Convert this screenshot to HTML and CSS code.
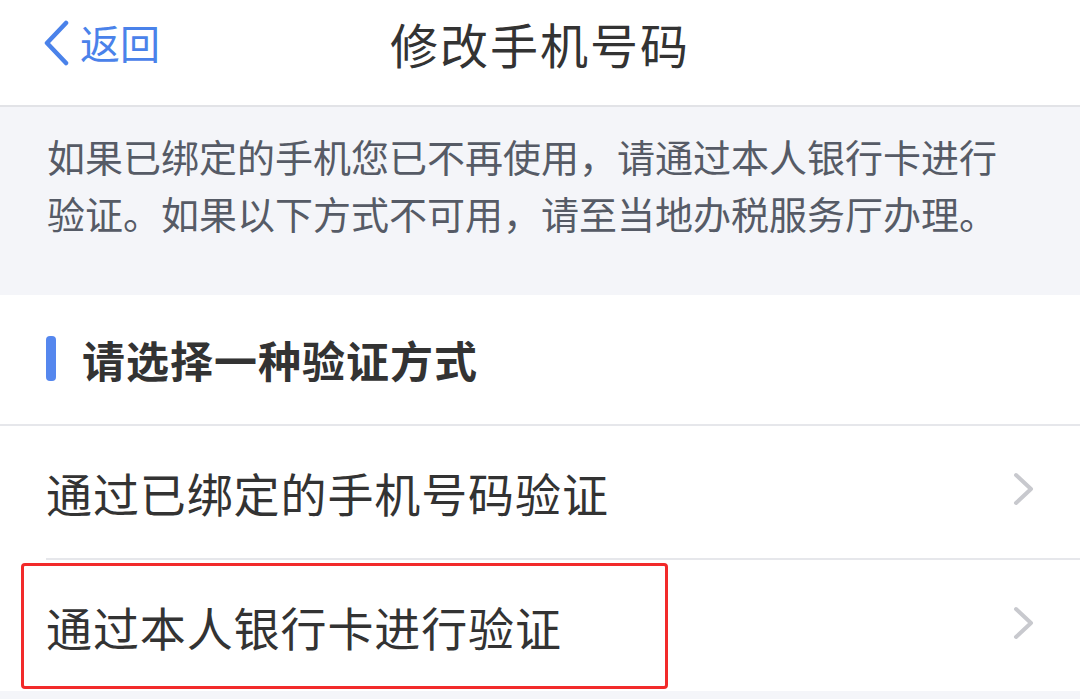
FILE: index.html
```html
<!DOCTYPE html>
<html lang="zh-CN">

<head>
    <meta charset="UTF-8">
    <meta name="viewport" content="width=device-width, initial-scale=1.0">
    <title>修改手机号码</title>
    <link rel="stylesheet" href="styles.css">
</head>

<body>
    <div class="page">
        <header class="nav">
            <a class="back" href="#">
                <svg class="back-icon" width="28" height="46" viewBox="0 0 28 46">
                    <path d="M24 3 L5 23 L24 43" fill="none" stroke="currentColor" stroke-width="4.5" stroke-linecap="round" stroke-linejoin="round" />
                </svg>
                <span>返回</span>
            </a>
            <h1 class="title">修改手机号码</h1>
            <div></div>
        </header>

        <div class="notice">
            <p>如果已绑定的手机您已不再使用，请通过本人银行卡进行验证。如果以下方式不可用，请至当地办税服务厅办理。</p>
        </div>

        <div class="section">
            <div class="section-head">
                <span class="bar"></span>
                <h2>请选择一种验证方式</h2>
            </div>
            <a class="row" href="#">
                <span>通过已绑定的手机号码验证</span>
                <svg class="arrow" width="22" height="34" viewBox="0 0 22 34">
                    <path d="M3 3 L18 17 L3 31" fill="none" stroke="currentColor" stroke-width="4" stroke-linecap="round" stroke-linejoin="round" />
                </svg>
            </a>
            <a class="row marked" href="#">
                <span>通过本人银行卡进行验证</span>
                <svg class="arrow" width="22" height="34" viewBox="0 0 22 34">
                    <path d="M3 3 L18 17 L3 31" fill="none" stroke="currentColor" stroke-width="4" stroke-linecap="round" stroke-linejoin="round" />
                </svg>
                <div class="mark"></div>
            </a>
        </div>
        <div class="footer-gap"></div>
    </div>
</body>
</html>
```

FILE: styles.css
```css
* {
    margin: 0;
    padding: 0;
    box-sizing: border-box;
}

body {
    width: 1080px;
    height: 699px;
    overflow: hidden;
    background: #f4f5f9;
    font-family: "Noto Sans CJK SC", "Noto Sans", sans-serif;
    color: #333333;
}

a {
    text-decoration: none;
    color: inherit;
}

.nav {
    height: 107px;
    background: #fff;
    border-bottom: 2px solid #e2e3e7;
    display: grid;
    grid-template-columns: 1fr auto 1fr;
    align-items: center;
    padding-bottom: 20px;
}

.back {
    display: flex;
    align-items: center;
    gap: 10px;
    padding-left: 42px;
    color: #4a82ea;
    font-size: 40px;
    line-height: 1;
}

.back-icon {
    margin-top: 0;
}

.back span {
    margin-top: -2px;
}

.title {
    font-size: 48px;
    font-weight: 400;
    letter-spacing: 2px;
    color: #333;
    line-height: 1;
}

.notice {
    height: 188px;
    padding: 20px 47px 0 47px;
}

.notice p {
    font-size: 38px;
    line-height: 57px;
    color: #565b66;
}

.section {
    background: #fff;
}

.section-head {
    height: 131px;
    display: flex;
    align-items: center;
    gap: 26px;
    padding-left: 46px;
    padding-bottom: 2px;
    border-bottom: 2px solid #e6e7eb;
}

.bar {
    width: 10px;
    height: 45px;
    border-radius: 4px;
    background: #5587ee;
}

.section-head h2 {
    font-size: 43px;
    font-weight: 700;
    letter-spacing: 1px;
    color: #333;
}

.row {
    position: relative;
    height: 132px;
    display: flex;
    align-items: center;
    justify-content: space-between;
    margin-left: 46px;
    padding-right: 45px;
    font-size: 46px;
    letter-spacing: 0.9px;
    color: #333;
}

.row+.row {
    border-top: 2px solid #e6e7eb;
    height: 133px;
}

.arrow {
    color: #c8c9ce;
    margin-top: -6px;
}

.mark {
    position: absolute;
    left: -25px;
    top: 3px;
    width: 647px;
    height: 126px;
    border: 3px solid #f22a2a;
    border-radius: 4px;
}

.footer-gap {
    height: 10px;
}
```
